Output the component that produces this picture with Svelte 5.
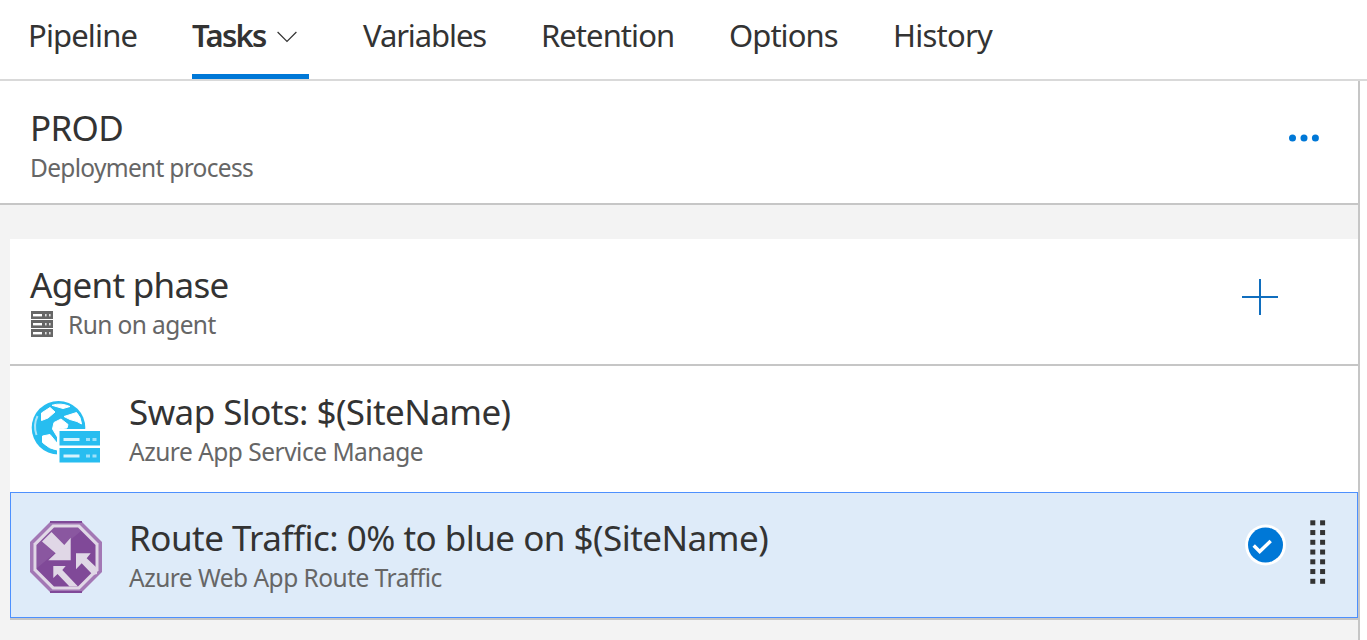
<script>
  const tabs = [
    { label: 'Pipeline', cls: 't1' },
    { label: 'Tasks', cls: 't2', active: true },
    { label: 'Variables', cls: 't3' },
    { label: 'Retention', cls: 't4' },
    { label: 'Options', cls: 't5' },
    { label: 'History', cls: 't6' }
  ];
  const gripRows = [0, 1, 2, 3, 4, 5, 6];
</script>

<div class="page">
  <nav class="tabs">
    {#each tabs as tab}
      <div class="tab {tab.cls}" class:active={tab.active}>
        <span>{tab.label}</span>
        {#if tab.active}
          <svg class="chevron" width="20" height="12" viewBox="0 0 20 12"><path d="M.6 1 10 10.4 19.4 1" fill="none" stroke="#333" stroke-width="1.2" /></svg>
        {/if}
      </div>
    {/each}
  </nav>

  <main class="panel">
    <section class="process">
      <div class="text">
        <div class="title prod">PROD</div>
        <div class="sub dep">Deployment process</div>
      </div>
      <svg class="more" width="32" height="8" viewBox="0 0 32 8" fill="#0078d7"><circle cx="4.5" cy="4" r="3.5" /><circle cx="16" cy="4" r="3.5" /><circle cx="27.4" cy="4" r="3.5" /></svg>
    </section>

    <div class="list">
      <section class="phase">
        <div class="text">
          <div class="title agent">Agent phase</div>
          <div class="sub run">
            <svg width="22" height="26" viewBox="0 0 22 26">
              {#each [0, 9, 18] as y}
                <rect x="0" y={y} width="22" height="8" fill="#666" />
                <rect x="2" y={y + 3} width="9" height="2.4" fill="#fff" />
                <rect x="14" y={y + 3} width="1.6" height="2.4" fill="#ddd" />
                <rect x="18" y={y + 3} width="1.6" height="2.4" fill="#ddd" />
              {/each}
            </svg>
            <span>Run on agent</span>
          </div>
        </div>
        <svg class="plus" width="38" height="36" viewBox="0 0 38 36"><path d="M1 18H37M19 0V36" stroke="#106ebe" stroke-width="2" /></svg>
      </section>

      <section class="task">
        <svg class="icon" width="72" height="72" viewBox="0 0 72 72">
          <circle cx="28.5" cy="26.800" r="26.800" fill="#27bdf0" />
          <g fill="#fff" stroke="#fff" stroke-width="1" stroke-linejoin="round">
            <path d="M11.500 12 20 6.500 25 11 18 17 11.500 19.500Z" />
            <path d="M22 4.300Q31 1.500 40 5.500L33 7.500Z" />
            <path d="M34 15.500 46.500 11.500Q51 16 51.500 23L47 20.500 40 18.500Z" />
            <path d="M24 21.500 31 18 38 23.500 37 27 29 28 27 35.500 22.500 28Z" />
            <path d="M12.500 35 20 33.500 27 42V49Q19 48 12.500 41.500Z" />
          </g>
          <path d="M7.500 15Q3 24 6.500 34" fill="none" stroke="#a9e4f9" stroke-width="2" />
          <path d="M27 28H72V64H27Z" fill="#fff" />
          <path d="M29.500 30h40.500v14.500H29.500zM29.500 47h40.500v14.500H29.500z" fill="#27bdf0" />
          <path d="M33.500 37h16v3h-16zM33.500 53.500h16v3h-16z" fill="#d6f3fd" />
          <path d="M56 37h4v3h-4zM62.500 37h4v3h-4zM56 53.500h4v3h-4zM62.500 53.500h4v3h-4z" fill="#9de1f9" />
        </svg>
        <div class="text">
          <div class="title swap">Swap Slots: $(SiteName)</div>
          <div class="sub manage">Azure App Service Manage</div>
        </div>
      </section>

      <section class="task selected">
        <svg class="icon" width="72" height="72" viewBox="0 0 72 72">
          <path d="M21 0H51L72 21V51L51 72H21L0 51V21Z" fill="#a378b5" />
          <path d="M22.500 3.500H49.500L68.500 22.500V49.500L49.500 68.500H22.500L3.500 49.500V22.500Z" fill="#e0d7e6" />
          <path d="M24 6.500H48L65.500 24V48L48 65.500H24L6.500 48V24Z" fill="#804998" />
          <path d="M24 6.500H48L51 10 7 47V24Z" fill="#fff" opacity=".08" />
          <path d="M20 1H52M20 71H52" stroke="#804998" stroke-width="2" />
          <g fill="#e0d7e6">
            <path d="M12 20.500 21.500 11 34.300 24 40.700 16.700V39.300H18.300L25.700 32.300Z" />
            <path d="M23.300 45H35.700L32.300 49 48 65.500H39.500L27.500 53 23.300 57Z" />
            <path d="M46 32.300H60.700L56.700 37.300 67 47V53L63 54 51.700 42.300 46 48.300Z" />
          </g>
        </svg>
        <div class="text">
          <div class="title route">Route Traffic: 0% to blue on $(SiteName)</div>
          <div class="sub webapp">Azure Web App Route Traffic</div>
        </div>
        <svg class="check" width="42" height="42" viewBox="0 0 42 42"><circle cx="21.500" cy="21" r="20.400" fill="#fff" /><circle cx="21.500" cy="21" r="17.500" fill="#0078d7" /><path d="m9.700 21.500 6 6L26.700 17" fill="none" stroke="#fff" stroke-width="3.400" /></svg>
        <svg class="grip" width="16" height="66" viewBox="0 0 16 66">
          {#each gripRows as r}
            <rect x=".3" y={r * 9.75 + 0.3} width="5" height="5" fill="#333" />
            <rect x="10.100" y={r * 9.75 + 0.3} width="5" height="5" fill="#333" />
          {/each}
        </svg>
      </section>
    </div>
  </main>
</div>

<style>
  :global(body) { margin: 0; overflow: hidden; background: #fff; }
  .page {
    width: 1367px;
    height: 640px;
    overflow: hidden;
    display: flex;
    flex-direction: column;
    font-family: "Noto Sans", "Open Sans", sans-serif;
    color: #333;
    background: #fff;
    white-space: nowrap;
  }
  .tabs {
    box-sizing: border-box;
    height: 81px;
    flex: none;
    display: grid;
    grid-template-columns: 164px 117px 54px 178px 188px 164px 100px;
    padding-left: 28px;
    border-bottom: 2px solid #d9d9d9;
    font-size: 31px;
    line-height: 70px;
  }
  .t1 { letter-spacing: -.86px; }
  .t2 { letter-spacing: -1.7px; }
  .t3 { grid-column: 4; letter-spacing: -1.1px; }
  .t4 { letter-spacing: -.95px; }
  .t5 { letter-spacing: -.95px; }
  .t6 { letter-spacing: -.75px; }
  .tab.active {
    box-sizing: border-box;
    display: flex;
    justify-content: space-between;
    padding-right: 12px;
    border-bottom: 5px solid #0078d7;
    font-weight: 600;
  }
  .chevron { margin-top: 31px; }
  .panel {
    box-sizing: border-box;
    width: 1360px;
    flex: 1;
    border-right: 2px solid #c6c6c6;
    background: #f3f3f3;
  }
  section { box-sizing: border-box; display: flex; background: #fff; }
  .text { flex: 1; padding-top: 1px; }
  .title { font-size: 35px; line-height: 40px; }
  .sub { font-size: 24.5px; line-height: 40px; color: #666; }
  .prod { letter-spacing: -.7px; }
  .dep { letter-spacing: -.7px; }
  .agent { letter-spacing: -.7px; }
  .run span { letter-spacing: -.6px; }
  .swap { letter-spacing: -.57px; }
  .manage { letter-spacing: -.5px; }
  .route { letter-spacing: -.52px; }
  .webapp { letter-spacing: -.52px; }
  .process {
    height: 124px;
    padding: 26px 38px 0 30px;
    border-bottom: 2px solid #c6c6c6;
  }
  .more { margin-top: 27px; }
  .list { margin: 34px 0 0 10px; }
  .phase {
    height: 127px;
    padding: 25px 79px 0 20px;
    border-bottom: 2px solid #c6c6c6;
  }
  .plus { margin-top: 15px; }
  .run { display: flex; align-items: center; gap: 15px; }
  .run svg { margin: -2px 0 0 1px; }
  .task { height: 126px; padding: 25px 32px 0 20px; }
  .icon { margin: 10px 27px 0 0; }
  .selected {
    background: #deebf9;
    border: 1px solid #4d90fe;
    padding: 24px 31px 0 19px;
    box-shadow: 0 2px #c6c6c6;
  }
  .selected .icon { margin-top: 4px; }
  .check { margin: 7px 24px 0 0; }
  .grip { margin-top: 3px; }
</style>
